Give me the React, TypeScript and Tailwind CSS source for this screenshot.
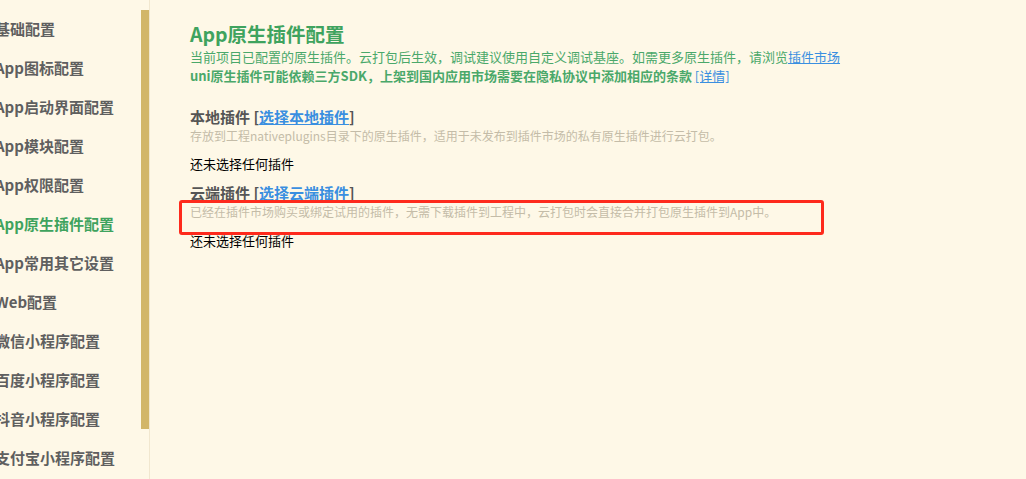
import React from "react";

const items = [
  "基础配置",
  "App图标配置",
  "App启动界面配置",
  "App模块配置",
  "App权限配置",
  "App原生插件配置",
  "App常用其它设置",
  "Web配置",
  "微信小程序配置",
  "百度小程序配置",
  "抖音小程序配置",
  "支付宝小程序配置",
];

export default function App() {
  const font = { fontFamily: '"Microsoft YaHei", "Noto Sans CJK SC", "Noto Sans", sans-serif' };
  return (
    <div
      className="relative flex h-[479px] w-[1026px] overflow-hidden bg-[#fef8e7]"
      style={font}
    >
      <div className="flex w-[150px] shrink-0 border-r border-[#f1e7cf]">
        <div className="w-[141px] overflow-hidden pt-[10px]">
          {items.map((t, i) => (
            <div
              key={t}
              className={`ml-[-5px] flex h-[39px] items-center whitespace-nowrap text-[15px] font-bold ${
                i === 5 ? "text-[#3fa35e]" : "text-[#5f5f5f]"
              }`}
            >
              {t}
            </div>
          ))}
        </div>
        <div className="w-[8px] pt-[10px]">
          <div className="h-[419px] w-[8px] bg-[#d2b669]" />
        </div>
      </div>
      <div className="flex-1 pl-[40px] pt-[21px]">
        <div className="text-[19.5px] font-bold leading-[26px] text-[#3fa35e]">App原生插件配置</div>
        <div className="text-[13px] leading-[19px] text-[#4aa86a]">
          当前项目已配置的原生插件。云打包后生效，调试建议使用自定义调试基座。如需更多原生插件，请浏览
          <span className="text-[#3a8fe0] underline">插件市场</span>
        </div>
        <div className="text-[13px] font-bold leading-[19px] text-[#4aa86a]">
          uni原生插件可能依赖三方SDK，上架到国内应用市场需要在隐私协议中添加相应的条款{" "}
          <span className="font-normal text-[#3a8fe0] underline">[详情]</span>
        </div>
        <div className="mt-[22px] text-[15px] font-bold leading-[20px] text-[#555555]">
          本地插件 [<span className="text-[#3a8fe0] underline">选择本地插件</span>]
        </div>
        <div className="text-[12px] leading-[18px] text-[#c4bca8]">
          存放到工程nativeplugins目录下的原生插件，适用于未发布到插件市场的私有原生插件进行云打包。
        </div>
        <div className="mt-[9px] text-[13px] leading-[20px] text-black">还未选择任何插件</div>
        <div className="mt-[9px] text-[15px] font-bold leading-[20px] text-[#555555]">
          云端插件 [<span className="text-[#3a8fe0] underline">选择云端插件</span>]
        </div>
        <div className="text-[12px] leading-[18px] text-[#c4bca8]">
          已经在插件市场购买或绑定试用的插件，无需下载插件到工程中，云打包时会直接合并打包原生插件到App中。
        </div>
        <div className="mt-[10px] text-[13px] leading-[20px] text-black">还未选择任何插件</div>
      </div>
      <div className="pointer-events-none absolute left-[179px] top-[200px] h-[35px] w-[645px] rounded-[3px] border-[3px] border-[#fe2a1c]" />
    </div>
  );
}
